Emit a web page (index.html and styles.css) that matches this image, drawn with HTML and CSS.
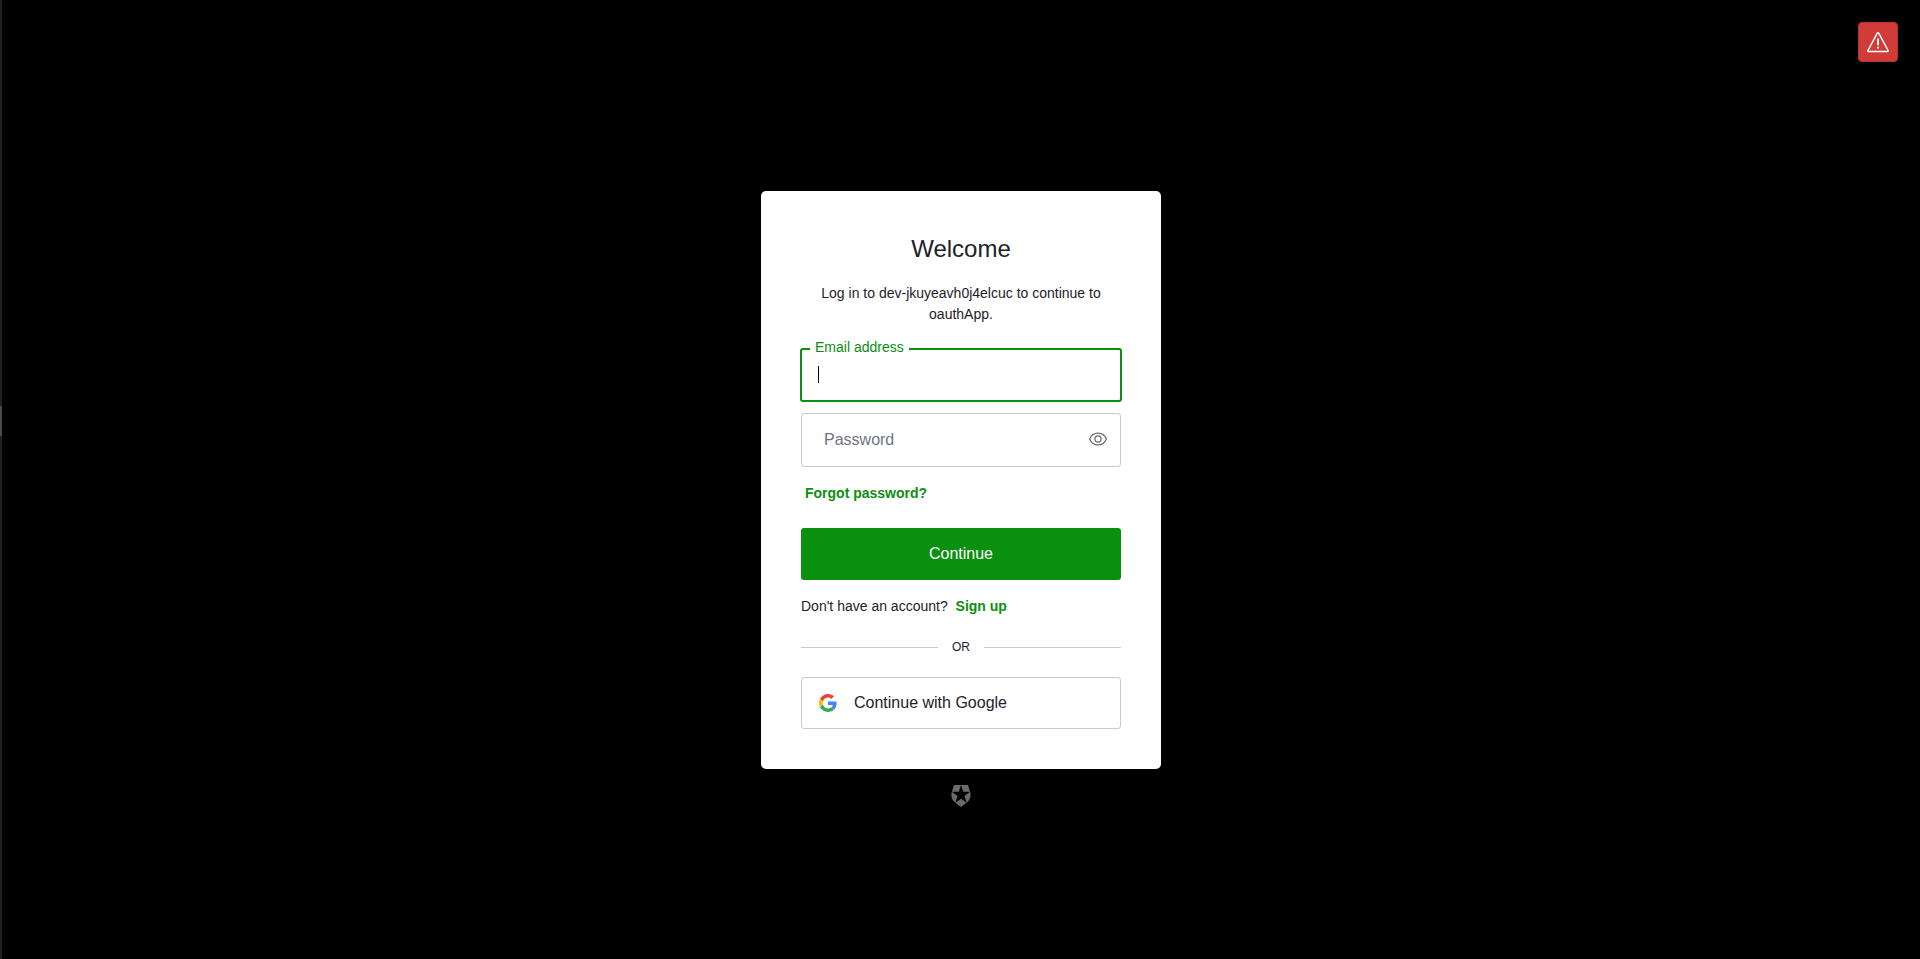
FILE: index.html
```html
<!DOCTYPE html>
<html lang="en">
<head>
<meta charset="utf-8">
<meta name="viewport" content="width=device-width, initial-scale=1">
<title>Log in | oauthApp</title>
<link rel="stylesheet" href="styles.css">
</head>
<body class="page">
<div class="edge"><span class="edge-handle"></span></div>
<main class="screen">
  <section class="card">
    <h1 class="title">Welcome</h1>
    <p class="subtitle">Log in to dev-jkuyeavh0j4elcuc to continue to oauthApp.</p>
    <form class="form">
      <div class="field field-active">
        <input class="input" id="email" type="email">
        <label class="label label-floating" for="email">Email address</label>
        <span class="caret"></span>
      </div>
      <div class="field">
        <input class="input input-password" id="password" type="password">
        <label class="label" for="password">Password</label>
        <button class="reveal" type="button" aria-label="Show password">
          <svg width="20" height="16" viewBox="0 0 20 16" fill="none" stroke="currentColor" stroke-width="1.2">
            <path d="M1.6 8C3.2 4.2 6.3 2.1 10 2.1S16.8 4.2 18.4 8C16.8 11.8 13.7 13.9 10 13.9S3.2 11.8 1.6 8Z"/>
            <circle cx="10" cy="8" r="3.1"/>
          </svg>
        </button>
      </div>
      <a class="link forgot" href="#">Forgot password?</a>
      <button class="button primary" type="submit">Continue</button>
    </form>
    <p class="signup">Don't have an account? <a class="link" href="#">Sign up</a></p>
    <div class="divider"><span>OR</span></div>
    <button class="button social" type="button">
      <svg width="18" height="18" viewBox="0 0 48 48">
        <path fill="#EA4335" d="M24 9.5c3.54 0 6.71 1.22 9.21 3.6l6.85-6.85C35.9 2.38 30.47 0 24 0 14.62 0 6.51 5.38 2.56 13.22l7.98 6.19C12.43 13.72 17.74 9.5 24 9.5z"/>
        <path fill="#4285F4" d="M46.98 24.55c0-1.57-.15-3.09-.38-4.55H24v9.02h12.94c-.58 2.96-2.26 5.48-4.78 7.18l7.73 6c4.51-4.18 7.09-10.36 7.09-17.65z"/>
        <path fill="#FBBC05" d="M10.53 28.59c-.48-1.45-.76-2.99-.76-4.59s.27-3.14.76-4.59l-7.98-6.19C.92 16.46 0 20.12 0 24c0 3.88.92 7.54 2.56 10.78l7.97-6.19z"/>
        <path fill="#34A853" d="M24 48c6.48 0 11.93-2.13 15.89-5.81l-7.73-6c-2.15 1.45-4.92 2.3-8.16 2.3-6.26 0-11.57-4.22-13.47-9.91l-7.98 6.19C6.51 42.62 14.62 48 24 48z"/>
      </svg>
      <span class="social-text">Continue with Google</span>
    </button>
  </section>
  <a class="brand" href="#" aria-label="Auth0">
    <svg width="22" height="22" viewBox="0 0 24 24" fill="currentColor">
      <path d="M21.98 7.448L19.62 0H4.347L2.02 7.448c-1.352 4.312.03 9.206 3.815 12.015L12.007 24l6.157-4.552c3.755-2.81 5.182-7.688 3.815-12.015l-6.16 4.58 2.343 7.45-6.157-4.597-6.158 4.58 2.358-7.433-6.188-4.55 7.63-.045L12.008 0l2.356 7.404 7.615.044z"/>
    </svg>
  </a>
</main>
<button class="alert" type="button" aria-label="Warning">
  <svg width="24" height="24" viewBox="0 0 24 24" fill="none" stroke="currentColor" stroke-width="1.5" stroke-linecap="round" stroke-linejoin="round">
    <path d="M11.3 3.2Q12 2.2 12.7 3.2L22.1 20.5Q22.3 21.4 21.4 21.5H2.6Q1.7 21.4 1.9 20.5Z"/>
    <path d="M12 9.2v5.4" stroke-width="1.9"/>
    <path d="M12 17.6v.2" stroke-width="2"/>
  </svg>
</button>
</body>
</html>
```
FILE: styles.css
```css
* {
  box-sizing: border-box;
}

.page {
  display: flex;
  min-height: 100vh;
  margin: 0;
  background: #000;
  color: #1e212a;
  font-family: "Liberation Sans", Arial, sans-serif;
  font-size: 14px;
  line-height: 21px;
}

.edge {
  display: flex;
  flex: none;
  flex-direction: column;
  width: 2px;
  padding-top: 406px;
  background: #202020;
}

.edge-handle {
  height: 30px;
  background: #4a4a4a;
}

.screen {
  display: grid;
  flex: 1;
  grid-template-rows: 1fr auto 1fr;
  justify-items: center;
  padding-top: 1px;
}

.card {
  grid-row: 2;
  width: 100%;
  max-width: 400px;
  padding: 40px;
  border-radius: 5px;
  background: #fff;
}

.title {
  margin: 0 0 16px;
  font-size: 24px;
  font-weight: 400;
  line-height: 36px;
  text-align: center;
}

.subtitle {
  margin: 0 0 23px;
  text-align: center;
}

.form {
  display: flex;
  flex-direction: column;
}

.field {
  position: relative;
  height: 54px;
  margin-bottom: 11px;
}

.input {
  width: 100%;
  height: 100%;
  padding: 0 16px;
  border: 1px solid #c9cace;
  border-radius: 3px;
  outline: none;
  background: #fff;
  color: inherit;
  font: inherit;
  font-size: 16px;
}

.input-password {
  padding-right: 48px;
}

.field-active {
  margin-right: -1px;
  margin-left: -1px;
}

.field-active .input {
  border: 2px solid #0a8f0e;
  caret-color: transparent;
}

.label {
  position: absolute;
  top: 16px;
  left: 23px;
  color: #6f7480;
  font-size: 16px;
}

.label-floating {
  top: -11px;
  left: 10px;
  padding: 0 5px;
  background: #fff;
  color: #0a8f0e;
  font-size: 14px;
}

.caret {
  position: absolute;
  top: 18px;
  left: 18px;
  width: 1px;
  height: 17px;
  background: #000;
}

.reveal {
  position: absolute;
  top: 10px;
  right: 7px;
  display: flex;
  align-items: center;
  justify-content: center;
  width: 32px;
  height: 32px;
  padding: 0;
  border: 0;
  background: none;
  color: #65676e;
}

.link {
  padding: 0 4px;
  color: #0a8f0e;
  font-weight: 700;
  text-decoration: none;
}

.forgot {
  align-self: flex-start;
  margin: 5px 0 24px;
}

.button {
  width: 100%;
  height: 52px;
  border-radius: 3px;
  font: inherit;
  font-size: 16px;
}

.primary {
  padding: 0 0 2px;
  border: 0;
  background: #0a8f0e;
  color: #fff;
}

.signup {
  margin: 16px 0 21px;
}

.divider {
  display: flex;
  align-items: center;
  gap: 14px;
  margin-bottom: 21px;
  font-size: 12px;
  line-height: 18px;
}

.divider::before,
.divider::after {
  flex: 1;
  height: 1px;
  background: #c9cace;
  content: "";
}

.social {
  display: flex;
  align-items: center;
  gap: 17px;
  padding: 0 17px;
  border: 1px solid #c9cace;
  background: #fff;
  color: #1e212a;
}

.social-text {
  padding-bottom: 2px;
}

.brand {
  grid-row: 3;
  align-self: start;
  display: flex;
  margin-top: 16px;
  color: #6a6a6a;
}

.alert {
  position: absolute;
  top: 22px;
  right: 22px;
  display: flex;
  align-items: center;
  justify-content: center;
  width: 40px;
  height: 40px;
  padding: 0;
  border: 1px solid #b8322f;
  border-radius: 4px;
  background: #d13c38;
  color: #fff;
}
```
